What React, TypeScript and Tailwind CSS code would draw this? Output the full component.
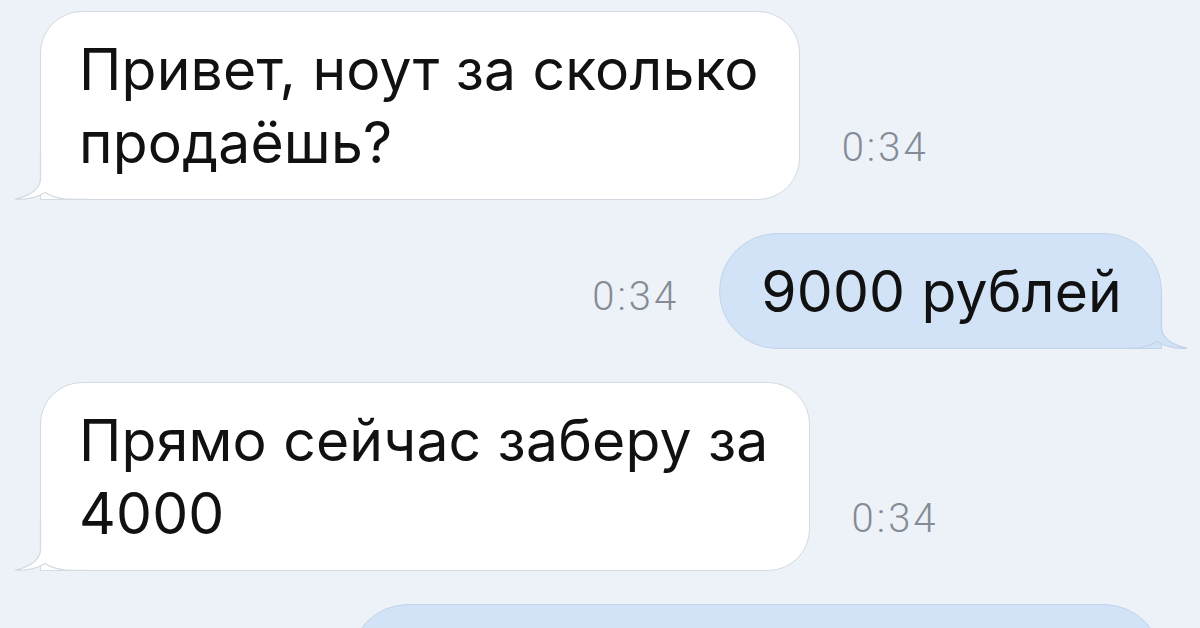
import React from 'react';

type Message = {
    id: number;
    lines: string[];
    time: string;
    outgoing: boolean;
};

const messages: Message[] = [
    { id: 1, lines: ['Привет, ноут за сколько', 'продаёшь?'], time: '0:34', outgoing: false },
    { id: 2, lines: ['9000 рублей'], time: '0:34', outgoing: true },
    { id: 3, lines: ['Прямо сейчас заберу за', '4000'], time: '0:34', outgoing: false },
];

// tail in the bottom-left corner; mirrored for outgoing bubbles
const Tail: React.FC<{ fill: string; stroke: string; flip?: boolean }> = ({ fill, stroke, flip }) => (
    <svg
        width="76"
        height="52"
        viewBox="0 0 76 52"
        className={
            flip
                ? 'absolute right-[-27px] bottom-[-1px] -scale-x-100'
                : 'absolute left-[-27px] bottom-[-1px]'
        }
    >
        <path
            d="M26.5 0 L26.5 30 C26.5 40 19 47 1 51.2 C12 51.8 23 49.5 31 44.5 C37 48.5 45 51.5 60 51.5 L76 51.5 L76 0 Z"
            fill={fill}
        />
        <path
            d="M26.5 0 L26.5 30 C26.5 40 19 47 1 51.2 C12 51.8 23 49.5 31 44.5 C37 48.5 45 51.5 60 51.5 L76 51.5"
            fill="none"
            stroke={stroke}
            strokeWidth="1.3"
        />
    </svg>
);

const Time: React.FC<{ value: string; className: string }> = ({ value, className }) => (
    <span
        className={`font-['Roboto','Liberation_Sans',sans-serif] font-light text-[40px] leading-none tracking-[3px] text-[#858b94] mb-[32px] ${className}`}
    >
        {value}
    </span>
);

const Text: React.FC<{ lines: string[] }> = ({ lines }) => (
    <div className="relative text-[57px] leading-[73px] tracking-[0.2px] text-[#111111]">
        {lines.map(line => (
            <div key={line} className="whitespace-nowrap">{line}</div>
        ))}
    </div>
);

const Bubble: React.FC<{ message: Message }> = ({ message }) => {
    if (message.outgoing) {
        return (
            <div className="flex items-end justify-end pr-[38px]">
                <Time value={message.time} className="mr-[40px]" />
                <div className="relative rounded-[58px] rounded-br-none border border-[#c2d3ea] bg-[#d2e2f7] pl-[41px] pr-[39px] pt-[21px] pb-[20px]">
                    <Tail fill="#d2e2f7" stroke="#c2d3ea" flip />
                    <Text lines={message.lines} />
                </div>
            </div>
        );
    }
    return (
        <div className="flex items-end pl-[40px]">
            <div className="relative rounded-[42px] rounded-bl-none border border-[#d4dae2] bg-white pl-[38px] pr-[40px] pt-[21px] pb-[20px]">
                <Tail fill="#ffffff" stroke="#d4dae2" />
                <Text lines={message.lines} />
            </div>
            <Time value={message.time} className="ml-[42px]" />
        </div>
    );
};

export default function App() {
    return (
        <div className="w-[1200px] h-[628px] overflow-hidden bg-[#edf2f9] font-['Inter','Liberation_Sans',sans-serif]">
            <div className="flex flex-col gap-[33px] pt-[11px]">
                {messages.map(m => (
                    <Bubble key={m.id} message={m} />
                ))}

                {/* next outgoing message, cut off by the frame */}
                <div className="flex justify-end pr-[38px]">
                    <div className="h-[150px] w-[812px] shrink-0 rounded-[58px] border border-[#c2d3ea] bg-[#d2e2f7]" />
                </div>
            </div>
        </div>
    );
}
